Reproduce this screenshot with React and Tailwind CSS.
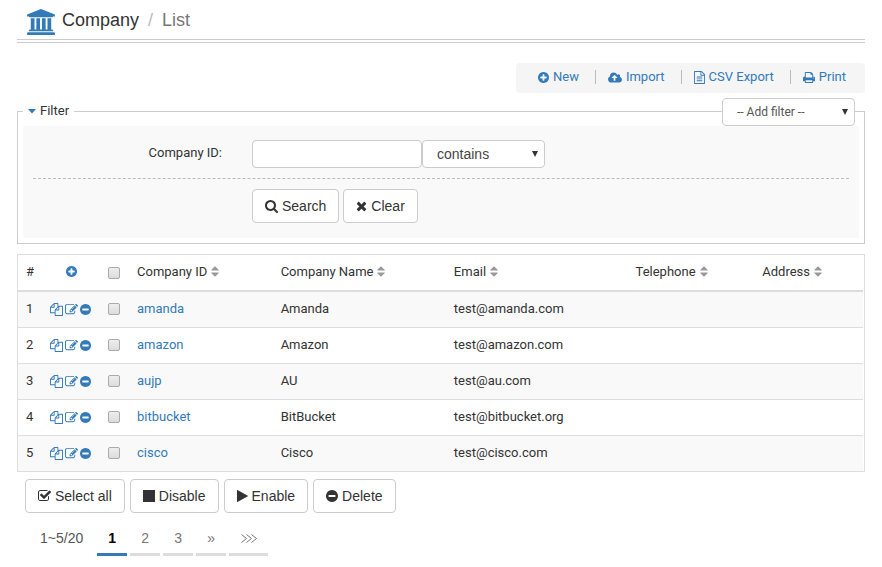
import React from "react";

const DISC =
  "zm320-64q0 209-103 385.5t-279.5 279.5-385.5 103-385.5-103-279.5-279.5-103-385.5 103-385.5 279.5-279.5 385.5-103 385.5 103 279.5 279.5 103 385.5z";

const ICONS = {
  bank: ["0 0 1920 1792", "M960 0l960 384v128h-128q0 26-20.5 45t-48.5 19h-1526q-28 0-48.5-19t-20.5-45h-128v-128zm-704 640h256v768h128v-768h256v768h128v-768h256v768h128v-768h256v768h59q28 0 48.5 19t20.5 45v64h-1664v-64q0-26 20.5-45t48.5-19h59v-768zm1595 960q28 0 48.5 19t20.5 45v128h-1920v-128q0-26 20.5-45t48.5-19h1782z"],
  plus: ["128 0 1536 1792", "M1344 960v-128q0-26-19-45t-45-19h-256v-256q0-26-19-45t-45-19h-128q-26 0-45 19t-19 45v256h-256q-26 0-45 19t-19 45v128q0 26 19 45t45 19h256v256q0 26 19 45t45 19h128q26 0 45-19t19-45v-256h256q26 0 45-19t19-45" + DISC],
  minus: ["128 0 1536 1792", "M1344 960v-128q0-26-19-45t-45-19h-768q-26 0-45 19t-19 45v128q0 26 19 45t45 19h768q26 0 45-19t19-45" + DISC],
  upload: ["0 0 1920 1792", "M1280 928q0-14-9-23l-352-352q-9-9-23-9t-23 9l-351 351q-10 12-10 24 0 14 9 23t23 9h224v352q0 13 9.5 22.5t22.5 9.5h192q13 0 22.5-9.5t9.5-22.5v-352h224q13 0 22.5-9.5t9.5-22.5zm640 288q0 159-112.5 271.5t-271.5 112.5h-1088q-185 0-316.5-131.5t-131.5-316.5q0-130 70-240t188-165q-2-30-2-43 0-212 150-362t362-150q156 0 285.5 87t188.5 231q71-62 166-62 106 0 181 75t75 181q0 76-41 138 130 31 213.5 135.5t83.5 238.5z"],
  file: ["128 0 1536 1792", "M1596 380q28 28 48 76t20 88v1152q0 40-28 68t-68 28h-1344q-40 0-68-28t-28-68v-1600q0-40 28-68t68-28h896q40 0 88 20t76 48zm-444-244v376h376q-10-29-22-41l-313-313q-12-12-41-22zm384 1528v-1024h-416q-40 0-68-28t-28-68v-416h-768v1536h1280zm-1024-864q0-14 9-23t23-9h704q14 0 23 9t9 23v64q0 14-9 23t-23 9h-704q-14 0-23-9t-9-23v-64zm736 224q14 0 23 9t9 23v64q0 14-9 23t-23 9h-704q-14 0-23-9t-9-23v-64q0-14 9-23t23-9h704zm0 256q14 0 23 9t9 23v64q0 14-9 23t-23 9h-704q-14 0-23-9t-9-23v-64q0-14 9-23t23-9h704z"],
  print: ["64 0 1664 1792", "M448 1536h896v-256h-896v256zm0-640h896v-384h-160q-40 0-68-28t-28-68v-160h-640v640zm1152 64q0-26-19-45t-45-19-45 19-19 45 19 45 45 19 45-19 19-45zm128 0v416q0 13-9.5 22.5t-22.5 9.5h-224v160q0 40-28 68t-68 28h-960q-40 0-68-28t-28-68v-160h-224q-13 0-22.5-9.5t-9.5-22.5v-416q0-79 56.5-135.5t135.5-56.5h64v-544q0-40 28-68t68-28h672q40 0 88 20t76 48l152 152q28 28 48 76t20 88v256h64q79 0 135.5 56.5t56.5 135.5z"],
  search: ["64 0 1664 1792", "M1216 832q0-185-131.5-316.5t-316.5-131.5-316.5 131.5-131.5 316.5 131.5 316.5 316.5 131.5 316.5-131.5 131.5-316.5zm512 832q0 52-38 90t-90 38q-54 0-90-38l-343-342q-179 124-399 124-143 0-273.5-55.5t-225-150-150-225-55.5-273.5 55.5-273.5 150-225 225-150 273.5-55.5 273.5 55.5 225 150 150 225 55.5 273.5q0 220-124 399l343 343q37 37 37 90z"],
  times: ["192 0 1408 1792", "M1490 1322q0 40-28 68l-136 136q-28 28-68 28t-68-28l-294-294-294 294q-28 28-68 28t-68-28l-136-136q-28-28-28-68t28-68l294-294-294-294q-28-28-28-68t28-68l136-136q28-28 68-28t68 28l294 294 294-294q28-28 68-28t68 28l136 136q28 28 28 68t-28 68l-294 294 294 294q28 28 28 68z"],
  copy: ["0 0 1792 1792", "M1696 384q40 0 68 28t28 68v1216q0 40-28 68t-68 28h-960q-40 0-68-28t-28-68v-288h-544q-40 0-68-28t-28-68v-672q0-40 20-88t48-76l408-408q28-28 76-48t88-20h416q40 0 68 28t28 68v328q68-40 128-40h416zm-544 213l-299 299h299v-299zm-640-384l-299 299h299v-299zm196 647l316-316v-416h-384v416q0 40-28 68t-68 28h-416v640h512v-256q0-40 20-88t48-76zm956 804v-1152h-384v416q0 40-28 68t-68 28h-416v640h896z"],
  edit: ["0 0 1792 1792", "M888 1184l116-116-152-152-116 116v56h96v96h56zm440-720q-16-16-33 1l-350 350q-17 17-1 33t33-1l350-350q17-17 1-33zm80 594v190q0 119-84.5 203.5t-203.5 84.5h-832q-119 0-203.5-84.5t-84.5-203.5v-832q0-119 84.5-203.5t203.5-84.5h832q63 0 117 25 15 7 18 23 3 17-9 29l-49 49q-14 14-32 8-23-6-45-6h-832q-66 0-113 47t-47 113v832q0 66 47 113t113 47h832q66 0 113-47t47-113v-126q0-13 9-22l64-64q15-15 35-7t20 29zm-96-738l288 288-672 672h-288v-288zm444 132l-92 92-288-288 92-92q28-28 68-28t68 28l152 152q28 28 28 68t-28 68z"],
  check: ["64 0 1664 1792", "M1472 930v318q0 119-84.5 203.5t-203.5 84.5h-832q-119 0-203.5-84.5t-84.5-203.5v-832q0-119 84.5-203.5t203.5-84.5h832q63 0 117 25 15 7 18 23 3 17-9 29l-49 49q-10 10-23 10-3 0-9-2-23-6-45-6h-832q-66 0-113 47t-47 113v832q0 66 47 113t113 47h832q66 0 113-47t47-113v-254q0-13 9-22l64-64q10-10 23-10 6 0 12 3 20 8 20 29zm231-489l-814 814q-24 24-57 24t-57-24l-430-430q-24-24-24-57t24-57l110-110q24-24 57-24t57 24l263 263 647-647q24-24 57-24t57 24l110 110q24 24 24 57t-24 57z"],
  stop: ["128 0 1536 1792", "M128 128h1536v1536h-1536z"],
  play: ["192 0 1408 1792", "M1576 927l-1328 738q-23 13-39.5 3t-16.5-36v-1472q0-26 16.5-36t39.5 3l1328 738q23 13 23 31t-23 31z"],
  sort: ["384 0 1024 1792", "M1408 1088q0 26-19 45l-448 448q-19 19-45 19t-45-19l-448-448q-19-19-19-45t19-45 45-19h896q26 0 45 19t19 45zm0-384q0 26-19 45t-45 19h-896q-26 0-45-19t-19-45 19-45l448-448q19-19 45-19t45 19l448 448q19 19 19 45z"],
};

function Icon({ name, className }) {
  const [box, path] = ICONS[name];
  return (
    <svg viewBox={box} fill="currentColor" aria-hidden="true" className={`shrink-0 overflow-visible ${className}`}>
      <path d={path} />
    </svg>
  );
}

function Caret() {
  return (
    <svg viewBox="0 0 6 6" fill="#333" aria-hidden="true" className="pointer-events-none absolute top-[11px] right-[7px] size-[6px]">
      <path d="M0 0h6L3 6z" />
    </svg>
  );
}

function Check({ label }) {
  return (
    <input
      type="checkbox"
      aria-label={label}
      className="block size-3 appearance-none rounded-[2px] border border-[#aaa] bg-linear-to-b from-[#eee] to-[#dcdcdc] checked:bg-[#337ab7]"
    />
  );
}

function Button({ icon, width, children }) {
  return (
    <button
      type="button"
      className="flex h-[34px] items-center gap-1 rounded border border-[#ccc] bg-white px-3 text-sm text-[#333]"
    >
      <Icon name={icon} className={`h-[14px] ${width}`} />
      {children}
    </button>
  );
}

const actions = [
  { icon: "plus", label: "New", width: "w-[11px]" },
  { icon: "upload", label: "Import", width: "w-[14px]" },
  { icon: "file", label: "CSV Export", width: "w-[11px]" },
  { icon: "print", label: "Print", width: "w-3" },
];

const columns = ["Company ID", "Company Name", "Email", "Telephone", "Address"];

const companies = [
  ["amanda", "Amanda", "test@amanda.com"],
  ["amazon", "Amazon", "test@amazon.com"],
  ["aujp", "AU", "test@au.com"],
  ["bitbucket", "BitBucket", "test@bitbucket.org"],
  ["cisco", "Cisco", "test@cisco.com"],
];

const rowActions = [
  ["copy", "Copy", "w-[13px]"],
  ["edit", "Edit", "w-[13px]"],
  ["minus", "Remove", "w-[11px]"],
];

export default function App() {
  return (
    <div className="bg-white px-[17px] pb-2 font-['Roboto','Liberation_Sans',sans-serif] text-[13px] leading-5 text-[#333]">
      <header className="flex h-[43px] items-center border-b-4 border-double border-[#ccc] pl-[10px] font-['Liberation_Sans',Arial,sans-serif] text-lg">
        <Icon name="bank" className="mt-[5px] h-[26px] w-7 text-[#337ab7]" />
        <h1 className="ml-[7px]">Company</h1>
        <span className="mx-[9px] text-[#bbb]">/</span>
        <span className="text-[#777]">List</span>
      </header>

      <nav className="mt-5 ml-auto flex h-[30px] w-fit items-center divide-x divide-[#bbb] rounded bg-[#f5f5f5] px-[10px] pb-[2px] text-[#337ab7]">
        {actions.map((a) => (
          <div key={a.label} className="flex h-[14px] items-center pr-4 pl-3 last:pr-[9px]">
            <a href="#" className="flex items-center gap-1">
              <Icon name={a.icon} className={`h-[13px] ${a.width}`} />
              {a.label}
            </a>
          </div>
        ))}
      </nav>

      <form className="relative mt-2" onSubmit={(e) => e.preventDefault()}>
        <fieldset className="border border-[#ccc] px-[5px] pb-[5px]">
          <legend className="flex items-center gap-1 px-[5px]">
            <svg viewBox="0 0 8 5" fill="#337ab7" aria-hidden="true" className="h-[5px] w-2">
              <path d="M0 0h8L4 4.500z" />
            </svg>
            Filter
          </legend>
          <div className="mt-[5px] bg-[#f9f9f9] px-[10px] pt-[14px] pb-[15px]">
            <div className="flex h-[39px] items-start border-b border-dashed border-[#bbb]">
              <label htmlFor="company-id" className="w-[219px] pt-[3px] pr-[30px] text-right">
                Company ID:
              </label>
              <input id="company-id" type="text" className="h-7 w-[170px] rounded border border-[#ccc] bg-white px-2" />
              <div className="relative">
                <select
                  aria-label="Condition"
                  className="h-7 w-[123px] appearance-none rounded border border-[#ccc] bg-white px-[14px] font-['Liberation_Sans',Arial,sans-serif] text-sm text-[#444]"
                >
                  <option>contains</option>
                  <option>equals</option>
                </select>
                <Caret />
              </div>
            </div>
            <div className="mt-[10px] ml-[219px] flex gap-1 font-['Liberation_Sans',Arial,sans-serif]">
              <Button icon="search" width="w-[13px]">Search</Button>
              <Button icon="times" width="w-[11px]">Clear</Button>
            </div>
          </div>
        </fieldset>
        <div className="absolute -top-[3px] right-[10px]">
          <select
            aria-label="Add filter"
            className="block h-7 w-[133px] appearance-none rounded border border-[#ccc] bg-white px-[14px] text-xs text-[#555]"
          >
            <option>-- Add filter --</option>
          </select>
          <Caret />
        </div>
      </form>

      <div className="mt-[10px] border border-[#ddd] pr-px">
        <table className="w-full table-fixed border-collapse text-left">
          <colgroup>
            <col className="w-6" />
            <col className="w-[58px]" />
            <col className="w-[29px]" />
            <col className="w-[17%]" />
            <col className="w-[20.5%]" />
            <col className="w-[21.5%]" />
            <col className="w-[15%]" />
            <col />
          </colgroup>
          <thead>
            <tr className="h-9 border-b-2 border-[#ddd]">
              <th className="px-2 pb-[2px] font-normal">#</th>
              <th className="px-2 pb-[2px]">
                <button type="button" aria-label="Add" className="mx-auto block text-[#337ab7]">
                  <Icon name="plus" className="h-[13px] w-[11px]" />
                </button>
              </th>
              <th className="px-2"><Check label="Select all rows" /></th>
              {columns.map((c) => (
                <th key={c} className="px-2 pb-[2px] font-normal">
                  <button type="button" className="flex items-center gap-1">
                    {c}
                    <Icon name="sort" className="h-[13px] w-2 text-[#999]" />
                  </button>
                </th>
              ))}
            </tr>
          </thead>
          <tbody>
            {companies.map(([id, name, email], i) => (
              <tr key={id} className="h-9 border-b border-[#ddd] last:border-b-0 odd:bg-[#f9f9f9]">
                <td className="px-2">{i + 1}</td>
                <td className="px-2">
                  <div className="flex gap-[2px] text-[#337ab7]">
                    {rowActions.map(([icon, label, width]) => (
                      <button key={icon} type="button" aria-label={`${label} ${id}`}>
                        <Icon name={icon} className={`h-[13px] ${width}`} />
                      </button>
                    ))}
                  </div>
                </td>
                <td className="px-2"><Check label={`Select ${id}`} /></td>
                <td className="px-2"><a href="#" className="text-[#337ab7]">{id}</a></td>
                <td className="px-2">{name}</td>
                <td className="px-2">{email}</td>
                <td />
                <td />
              </tr>
            ))}
          </tbody>
        </table>
      </div>

      <div className="mt-[7px] flex gap-[5px] pl-2 font-['Liberation_Sans',Arial,sans-serif]">
        <Button icon="check" width="w-[13px]">Select all</Button>
        <Button icon="stop" width="w-3">Disable</Button>
        <Button icon="play" width="w-[11px]">Enable</Button>
        <Button icon="minus" width="w-3">Delete</Button>
      </div>

      <nav aria-label="Pages" className="mt-[10px] flex gap-[3px] pl-[23px] font-['Liberation_Sans',Arial,sans-serif] text-sm text-[#777]">
        <span className="mr-[11px] pt-[5px] text-[#555]">1~5/20</span>
        <a href="#" aria-current="page" className="h-[33px] w-[30px] border-b-3 border-[#337ab7] pt-[5px] text-center font-bold text-black">1</a>
        <a href="#" className="h-[33px] w-[30px] border-b-3 border-[#ddd] pt-[5px] text-center">2</a>
        <a href="#" className="h-[33px] w-[30px] border-b-3 border-[#ddd] pt-[5px] text-center">3</a>
        <a href="#" className="h-[33px] w-[30px] border-b-3 border-[#ddd] pt-[5px] text-center">»</a>
        <a href="#" aria-label="Last page" className="flex h-[33px] w-[39px] justify-center border-b-3 border-[#ddd] pt-[11px]">
          <svg viewBox="0 0 16 9" fill="none" stroke="currentColor" aria-hidden="true" className="h-[9px] w-4">
            <path d="M0.500 0.500l5 4-5 4M5.500 0.500l5 4-5 4M10.500 0.500l5 4-5 4" />
          </svg>
        </a>
      </nav>
    </div>
  );
}
